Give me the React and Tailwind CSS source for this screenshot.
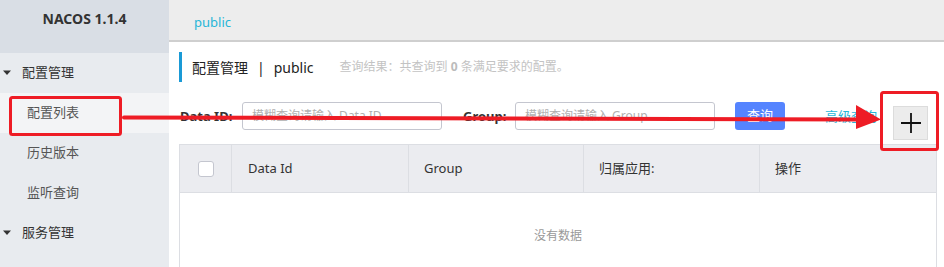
import React from 'react'

const cjk = { fontFamily: '"Noto Sans", "Noto Sans CJK SC", sans-serif' }

function MenuGroup({ label }) {
  return (
    <div className="flex items-center h-10 pl-[2px] text-[13px] text-[#333]">
      <svg width="10" height="8" viewBox="0 0 10 8" className="mr-[10px]">
        <path d="M1 1.5 L9 1.5 L5 6 Z" fill="#333" />
      </svg>
      <span>{label}</span>
    </div>
  )
}

function MenuItem({ label, active }) {
  return (
    <div className={`flex items-center h-10 pl-[27px] text-[13px] text-[#555] ${active ? 'bg-[#f3f4f6]' : ''}`}>
      {label}
    </div>
  )
}

export default function App() {
  return (
    <div className="relative flex w-[944px] h-[267px] overflow-hidden bg-white" style={cjk}>
      {/* sidebar */}
      <div className="w-[169px] shrink-0 bg-[#e8ebef]">
        <div className="h-[53px] bg-[#d9dee5] flex justify-center pt-[8px] text-[14px] font-bold text-[#333]">
          NACOS 1.1.4
        </div>
        <MenuGroup label="配置管理" />
        <MenuItem label="配置列表" active />
        <MenuItem label="历史版本" />
        <MenuItem label="监听查询" />
        <MenuGroup label="服务管理" />
      </div>

      {/* main */}
      <div className="flex-1 flex flex-col">
        <div className="shrink-0 h-[42px] bg-[#ededed] border-b-2 border-[#cfcfcf] pl-[25px] pt-[13px] text-[13px] text-[#27b6d8]">
          public
        </div>

        <div className="shrink-0 pl-[10px] pr-[7px]">
          <div className="mt-[10px] flex items-center h-[30px] border-l-[3px] border-[#1a9ad6] pl-[10px]">
            <span className="text-[14px] text-[#222]">配置管理</span>
            <span className="text-[14px] text-[#222] mx-[9px]">|</span>
            <span className="text-[14px] text-[#222]">public</span>
            <span className="ml-[26px] text-[12px] text-[#c3c3c3]">
              查询结果：共查询到 <b className="text-[#bbb]">0</b> 条满足要求的配置。
            </span>
          </div>

          <div className="mt-[20px] flex items-start h-[28px]">
            <span className="mt-[5px] w-[63px] text-[13px] font-bold text-[#333] pl-[1px]">Data ID:</span>
            <div className="w-[200px] h-[28px] border border-[#c4c6cf] rounded-[3px] flex items-center pl-[9px] text-[12px] text-[#b0b0b0]">
              模糊查询请输入 Data ID
            </div>
            <span className="mt-[5px] ml-[21px] w-[52px] text-[13px] font-bold text-[#333]">Group:</span>
            <div className="w-[200px] h-[28px] border border-[#c4c6cf] rounded-[3px] flex items-center pl-[9px] text-[12px] text-[#b0b0b0]">
              模糊查询请输入 Group
            </div>
            <div className="ml-[20px] w-[50px] h-[28px] rounded-[3px] bg-[#5584ff] flex items-center justify-center text-[13px] text-white">
              查询
            </div>
            <span className="mt-[5px] ml-[40px] text-[13px] text-[#27b6d8]">高级查询</span>
            <div className="ml-auto mr-[9px] mt-[4px] w-[35px] h-[34px] shrink-0 bg-[#ececec] border border-[#dcdcdc] flex items-center justify-center">
              <svg width="22" height="22" viewBox="0 0 22 22">
                <path d="M11 1 V21 M1 11 H21" stroke="#111" strokeWidth="1.8" />
              </svg>
            </div>
          </div>

          <div className="mt-[14px] border-x border-t border-[#dcdee3]">
            <div className="flex h-[48px] bg-[#ebecf0] border-b border-[#dcdee3] text-[13px] text-[#333]">
              <div className="w-[52px] border-r border-[#dcdee3] flex items-center justify-center">
                <div className="w-[16px] h-[16px] bg-white border border-[#c4c6cf] rounded-[3px]" />
              </div>
              <div className="w-[177px] border-r border-[#dcdee3] flex items-center pl-[16px]">Data Id</div>
              <div className="w-[175px] border-r border-[#dcdee3] flex items-center pl-[15px]">Group</div>
              <div className="w-[176px] border-r border-[#dcdee3] flex items-center pl-[15px]">归属应用:</div>
              <div className="flex-1 flex items-center pl-[15px]">操作</div>
            </div>
            <div className="h-[90px] flex justify-center pt-[34px] text-[12px] text-[#999]">
              没有数据
            </div>
          </div>
        </div>
      </div>

      {/* red annotations */}
      <svg className="absolute inset-0 pointer-events-none" width="944" height="267" viewBox="0 0 944 267">
        <rect x="10.5" y="97.5" width="110" height="37" rx="2" fill="none" stroke="#ee1c25" strokeWidth="3" />
        <rect x="881.5" y="92.5" width="56" height="57" rx="2" fill="none" stroke="#ee1c25" strokeWidth="3" />
        <path d="M124 117.5 L860 119.5" stroke="#ee1c25" strokeWidth="4" strokeLinecap="round" />
        <path d="M856 105 L881 119.5 L856 129 Z" fill="#ee1c25" />
      </svg>
    </div>
  )
}
